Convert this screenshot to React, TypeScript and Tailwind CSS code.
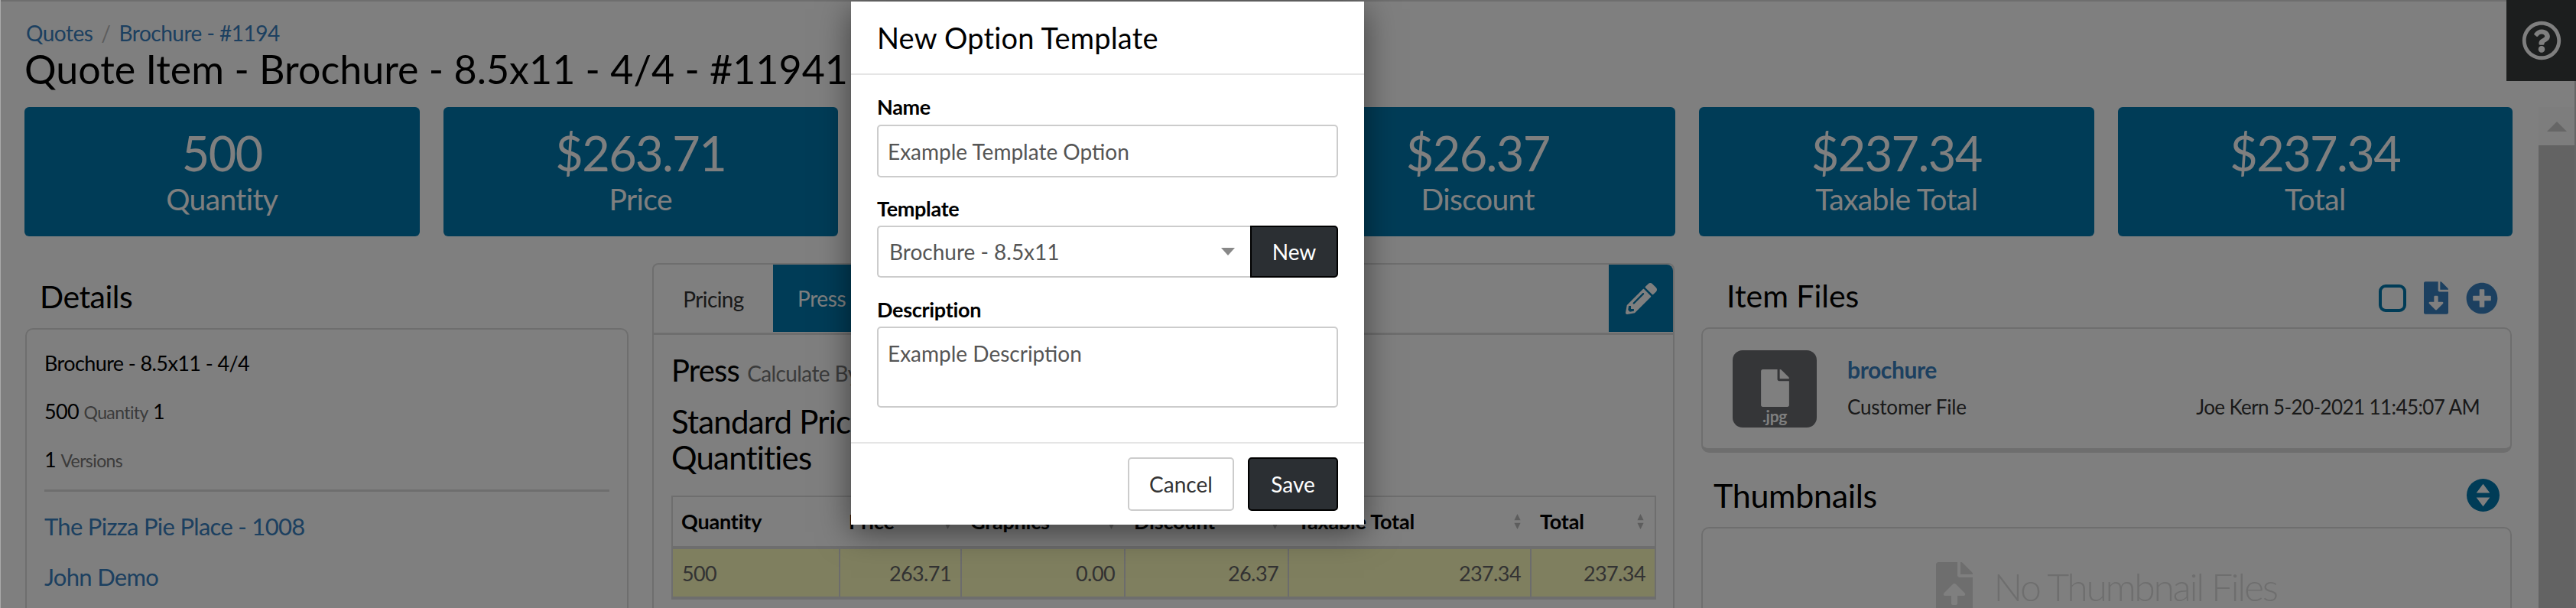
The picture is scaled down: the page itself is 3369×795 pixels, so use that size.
import { FaRegQuestionCircle, FaPencilAlt, FaFileDownload, FaPlusCircle, FaFile, FaFileUpload } from 'react-icons/fa';

const STATS = [
  { value: '500', label: 'Quantity' },
  { value: '$263.71', label: 'Price' },
  { value: '$0.00', label: 'Graphics' },
  { value: '$26.37', label: 'Discount' },
  { value: '$237.34', label: 'Taxable Total' },
  { value: '$237.34', label: 'Total' },
];

const COLUMNS = [
  { label: 'Quantity', value: '500', width: 'w-[219px]', left: true },
  { label: 'Price', value: '263.71', width: 'w-[159px]' },
  { label: 'Graphics', value: '0.00', width: 'w-[214px]' },
  { label: 'Discount', value: '26.37', width: 'w-[214px]' },
  { label: 'Taxable Total', value: '237.34', width: 'w-[317px]' },
  { label: 'Total', value: '237.34', width: 'flex-1' },
];

// up/down triangles next to a table header
function SortArrows() {
  return (
    <svg viewBox="0 0 16 34" className="w-[15px] h-[20px] shrink-0 text-[#bbbbbb]" fill="currentColor">
      <path d="M8 0 L15 14 L1 14 Z" />
      <path d="M8 34 L15 20 L1 20 Z" />
    </svg>
  );
}

export default function App() {
  return (
    <div className="relative w-[3369px] h-[795px] overflow-hidden bg-white text-black border-l border-[#aaaaaa] font-['Lato','Noto_Sans',sans-serif]">
      <div className="h-[2px] bg-[#dcdcdc]" />
      {/* page behind the dialog */}
      <div className="pl-[31px] pr-[83px] pt-[22px]">
        <div className="flex items-center h-[38px] pl-[2px] text-[28px] text-[#3880c0] tracking-[-0.5px]">
          <span>Quotes</span>
          <span className="mx-[11px] text-[#bbbbbb]">/</span>
          <span>Brochure - #1194</span>
        </div>
        <h1 className="h-[78px] text-[52px] leading-[56px] whitespace-nowrap">Quote Item - Brochure - 8.5x11 - 4/4 - #11941</h1>

        <div className="grid grid-cols-6 gap-[31px]">
          {STATS.map(stat => (
            <div key={stat.label} className="h-[169px] rounded-[6px] bg-[#0078ae] text-white flex flex-col items-center pt-[22px]">
              <div className="text-[63px] leading-[76px] tracking-[-1.6px]">{stat.value}</div>
              <div className="text-[39px] leading-[44px] tracking-[-0.6px]">{stat.label}</div>
            </div>
          ))}
        </div>

        <div className="flex mt-[35px]">
          {/* details */}
          <div className="w-[789px] ml-[1px] shrink-0">
            <h2 className="h-[85px] pl-[19px] pt-[20px] text-[41px] leading-[48px] tracking-[-0.5px]">Details</h2>
            <div className="h-[500px] rounded-[10px] border-2 border-[#dddddd] px-[23px] pt-[25px] text-[27px] tracking-[-0.6px]">
              <div className="leading-[38px]">Brochure - 8.5x11 - 4/4</div>
              <div className="mt-[25px] leading-[38px]">500 <span className="text-[23px] text-[#777777]">Quantity</span> 1</div>
              <div className="mt-[24px] leading-[38px]">1 <span className="text-[23px] text-[#777777]">Versions</span></div>
              <div className="mt-[19px] h-[3px] bg-[#dddddd]" />
              <div className="mt-[23px] text-[31px] leading-[44px] tracking-[-0.7px] text-[#3880c0]">The Pizza Pie Place - 1008</div>
              <div className="mt-[22px] text-[31px] leading-[44px] tracking-[-0.7px] text-[#3880c0]">John Demo</div>
            </div>
          </div>

          {/* pricing tabs */}
          <div className="ml-[31px] w-[1337px] shrink-0 h-[600px] border-x-2 border-t-2 border-[#dddddd] rounded-t-[8px]">
            <div className="flex h-[92px] border-b-[3px] border-[#dddddd]">
              <div className="w-[156px] flex items-center justify-center text-[28px] tracking-[-0.6px] text-[#333333]">Pricing</div>
              <div className="w-[200px] mb-[1px] bg-[#0078ae] text-white flex items-center pl-[32px] text-[28px] tracking-[-0.4px]">Press</div>
              <div className="ml-auto w-[84px] mb-[1px] rounded-tr-[8px] bg-[#0078ae] text-white flex items-center justify-center">
                <FaPencilAlt className="w-[41px] h-[41px]" />
              </div>
            </div>
            <div className="pl-[23px] pt-[22px]">
              <div className="h-[48px] flex items-baseline text-[40px] leading-[48px] tracking-[-0.8px]">
                Press <span className="ml-[10px] text-[28px] tracking-[-0.6px] text-[#777777]">Calculate By Quantity</span>
              </div>
              <div className="mt-[20px] text-[42px] leading-[47px] tracking-[-0.8px] w-[500px]">Standard Pricing For Quantities</div>
              <div className="mt-[26px] w-[1288px] border-x-2 border-t-2 border-[#dddddd]">
                <div className="flex h-[68px] border-b-[4px] border-[#dddddd]">
                  {COLUMNS.map(col => (
                    <div key={col.label} className={`${col.width} flex items-center justify-between pl-[11px] pr-[11px] text-[27px] font-bold tracking-[-0.2px]`}>
                      <span>{col.label}</span>
                      {!col.left && <SortArrows />}
                    </div>
                  ))}
                </div>
                <div className="flex h-[66px] bg-[#fffebf] border-b-[4px] border-[#dddddd] text-[27px] tracking-[-0.6px] text-[#666666]">
                  {COLUMNS.map(col => (
                    <div key={col.label} className={`${col.width} flex items-center px-[12px] pt-[2px] border-r-2 border-[#d8d8d8] last:border-r-0 ${col.left ? 'justify-start' : 'justify-end'}`}>
                      {col.value}
                    </div>
                  ))}
                </div>
              </div>
            </div>
          </div>

          {/* files */}
          <div className="ml-[35px] w-[1060px] shrink-0">
            <div className="flex items-start h-[84px] pl-[33px]">
              <h2 className="pt-[19px] text-[41px] leading-[48px]">Item Files</h2>
              <div className="ml-auto mr-[18px] flex items-center gap-[23px] pt-[24px]">
                <div className="w-[36px] h-[36px] rounded-[9px] border-[4px] border-[#0078ae]" />
                <FaFileDownload className="w-[32px] h-[43px] text-[#3880c0]" />
                <FaPlusCircle className="w-[42px] h-[42px] text-[#3880c0]" />
              </div>
            </div>
            <div className="h-[164px] rounded-[10px] border-2 border-b-[6px] border-[#dddddd] flex pl-[39px] pr-[40px] pt-[28px]">
              <div className="w-[110px] h-[101px] rounded-[13px] bg-[#6a6c70] flex flex-col items-center pt-[25px] text-white">
                <FaFile className="w-[37px] h-[49px]" />
                <div className="text-[21px] font-bold leading-[24px] tracking-[-0.3px]">.jpg</div>
              </div>
              <div className="flex-1 pl-[40px]">
                <div className="text-[30px] font-bold leading-[36px] mt-[7px] tracking-[-0.4px] text-[#3880c0]">brochure</div>
                <div className="flex justify-between mt-[13px] text-[26px] leading-[36px] text-[#333333]">
                  <span className="tracking-[-0.2px]">Customer File</span>
                  <span className="tracking-[-0.6px]">Joe Kern 5-20-2021 11:45:07 AM</span>
                </div>
              </div>
            </div>
            <div className="flex items-center h-[97px] pl-[16px] pt-[14px]">
              <h2 className="text-[43px] leading-[48px] tracking-[-0.3px]">Thumbnails</h2>
              <svg viewBox="0 0 44 44" className="ml-auto mr-[16px] w-[43px] h-[43px] text-[#0078ae]" fill="currentColor">
                <path fillRule="evenodd" d="M22 0a22 22 0 1 0 0 44 22 22 0 0 0 0-44zM22 7l9 12H13zM22 37L13 25h18z" />
              </svg>
            </div>
            <div className="h-[300px] rounded-[10px] border-2 border-[#dddddd] flex justify-center pt-[44px] text-[#dddddd]">
              <FaFileUpload className="w-[48px] h-[64px]" />
              <div className="ml-[27px] text-[50px] leading-[64px] font-light tracking-[-2.4px] text-[#dddddd]">No Thumbnail Files</div>
            </div>
          </div>
        </div>
      </div>

      {/* help tab and scrollbar */}
      <div className="absolute top-0 right-0 w-[91px] h-[106px] bg-[#383c3c] flex items-center justify-center text-white">
        <FaRegQuestionCircle className="w-[52px] h-[52px]" />
      </div>
      <div className="absolute top-[106px] bottom-0 right-0 w-[2px] bg-[#cccccc]" />
      <div className="absolute top-[140px] bottom-0 right-[2px] w-[47px] bg-[#c6c6c6]">
        <div className="h-[50px] bg-[#fafafa] flex items-center justify-center">
          <div className="border-x-[13px] border-x-transparent border-b-[13px] border-b-[#cccccc]" />
        </div>
      </div>

      {/* modal backdrop */}
      <div className="absolute inset-0 bg-black/50" />

      {/* dialog */}
      <div className="absolute left-[1112px] top-[2px] w-[671px] bg-white shadow-[0_10px_40px_rgba(0,0,0,0.5)] text-black text-[28px]">
        <div className="h-[96px] border-b-2 border-[#e5e5e5] pl-[34px] flex items-center text-[38px] tracking-[0.2px]">New Option Template</div>
        <div className="px-[34px] pt-[26px] h-[480px]">
          <label className="block font-bold text-[27px] tracking-[-0.3px] leading-[32px]">Name</label>
          <div className="mt-[7px] h-[69px] rounded-[5px] border-2 border-[#cccccc] flex items-center pl-[12px] text-[#555555]">Example Template Option</div>

          <label className="block mt-[25px] font-bold text-[27px] tracking-[-0.3px] leading-[32px]">Template</label>
          <div className="mt-[6px] flex h-[68px]">
            <div className="flex-1 rounded-l-[5px] border-2 border-r-0 border-[#cccccc] flex items-center pl-[14px] pr-[20px] text-[#555555]">
              <span>Brochure - 8.5x11</span>
              <span className="ml-auto border-x-[9px] border-x-transparent border-t-[10px] border-t-[#888888]" />
            </div>
            <div className="w-[115px] rounded-r-[5px] border-2 border-black bg-[#2b2f33] text-white flex items-center justify-center">New</div>
          </div>

          <label className="block mt-[26px] font-bold text-[27px] tracking-[-0.3px] leading-[32px]">Description</label>
          <div className="mt-[6px] h-[106px] rounded-[5px] border-2 border-[#cccccc] pl-[12px] pt-[15px] leading-[36px] text-[#555555]">Example Description</div>
        </div>
        <div className="h-[108px] border-t-2 border-[#e5e5e5] flex justify-end gap-[18px] pr-[34px] pt-[18px]">
          <div className="w-[139px] h-[70px] rounded-[5px] border-2 border-[#cccccc] flex items-center justify-center text-[#333333]">Cancel</div>
          <div className="w-[118px] h-[70px] rounded-[5px] border-2 border-black bg-[#2b2f33] text-white flex items-center justify-center">Save</div>
        </div>
      </div>
    </div>
  );
}
